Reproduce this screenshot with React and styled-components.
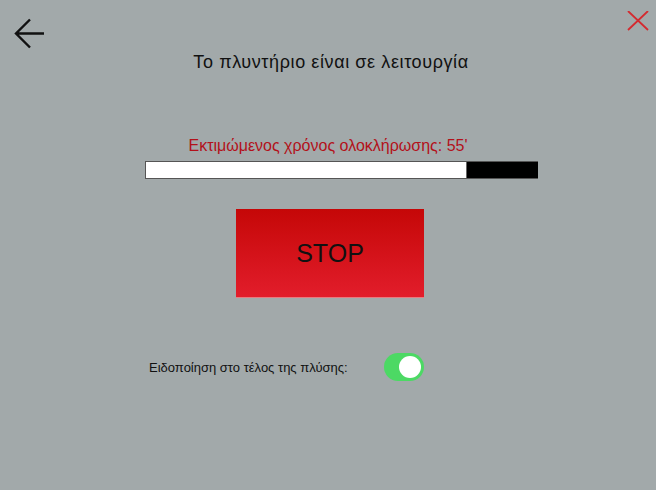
import React, { useState } from "react";
import styled, { createGlobalStyle } from "styled-components";

const Global = createGlobalStyle`
  body {
    margin: 0;
    font-family: "Liberation Sans", Arial, sans-serif;
  }
`;

const Page = styled.div`
  width: 656px;
  height: 490px;
  background: #a2a9aa;
  display: flex;
  flex-direction: column;
  align-items: center;
  overflow: hidden;
`;

const TopBar = styled.div`
  align-self: stretch;
  display: flex;
  justify-content: space-between;
  align-items: flex-start;
  padding: 11px 7px 0 14px;
`;

const IconButton = styled.button`
  border: none;
  background: none;
  padding: 0;
  margin-top: ${(p) => p.offset || 0}px;
  cursor: pointer;
  display: block;
  svg {
    display: block;
  }
`;

const Title = styled.h1`
  margin: 3px 0 0 6px;
  font-size: 18px;
  line-height: 21px;
  letter-spacing: 0.6px;
  font-weight: normal;
  color: #111;
`;

const Estimate = styled.div`
  margin-top: 63px;
  font-size: 16px;
  line-height: 19px;
  color: #b3111a;
`;

const Bar = styled.div`
  align-self: flex-start;
  margin: 6px 0 0 145px;
  width: 393px;
  height: 18px;
  box-sizing: border-box;
  background: #000;
  border: 1px solid #555;
  border-right: none;
`;

const Fill = styled.div`
  height: 100%;
  background: #fff;
  border-right: 1px solid #666;
  box-sizing: border-box;
`;

const StopButton = styled.button`
  margin: 30px 0 0 4px;
  width: 188px;
  height: 89px;
  border: none;
  border-bottom: 1px solid #e87b80;
  background: linear-gradient(#c50707, #e21d2b);
  color: #111;
  font-family: inherit;
  font-size: 25px;
  cursor: pointer;
`;

const NotifyRow = styled.div`
  align-self: flex-start;
  margin: 55px 0 0 149px;
  display: flex;
  align-items: center;
  gap: 36px;
`;

const NotifyLabel = styled.span`
  font-size: 13px;
  color: #111;
`;

const Toggle = styled.button`
  width: 40px;
  height: 28px;
  border: none;
  border-radius: 14px;
  padding: 3px;
  background: ${(p) => (p.on ? "#4cd964" : "#c8c8c8")};
  display: flex;
  justify-content: ${(p) => (p.on ? "flex-end" : "flex-start")};
  cursor: pointer;
`;

const Knob = styled.span`
  width: 22px;
  height: 22px;
  border-radius: 50%;
  background: #fff;
`;

export default function App() {
  const [notify, setNotify] = useState(true);
  const progress = 0.82;
  return (
    <Page>
      <Global />
      <TopBar>
        <IconButton offset={7} aria-label="back">
          <svg width="31" height="31" viewBox="0 0 31 31">
            <path
              d="M30 15.5H2M16 1.5L2 15.5L16 29.5"
              fill="none"
              stroke="#111"
              strokeWidth="2.4"
            />
          </svg>
        </IconButton>
        <IconButton aria-label="close">
          <svg width="22" height="20" viewBox="0 0 22 20">
            <path d="M1 0L21 19M21 0L1 19" stroke="#d42a2f" strokeWidth="1.8" />
          </svg>
        </IconButton>
      </TopBar>
      <Title>Το πλυντήριο είναι σε λειτουργία</Title>
      <Estimate>Εκτιμώμενος χρόνος ολοκλήρωσης: 55'</Estimate>
      <Bar>
        <Fill style={{ width: `${progress * 100}%` }} />
      </Bar>
      <StopButton>STOP</StopButton>
      <NotifyRow>
        <NotifyLabel>Ειδοποίηση στο τέλος της πλύσης:</NotifyLabel>
        <Toggle on={notify} onClick={() => setNotify(!notify)}>
          <Knob />
        </Toggle>
      </NotifyRow>
    </Page>
  );
}
